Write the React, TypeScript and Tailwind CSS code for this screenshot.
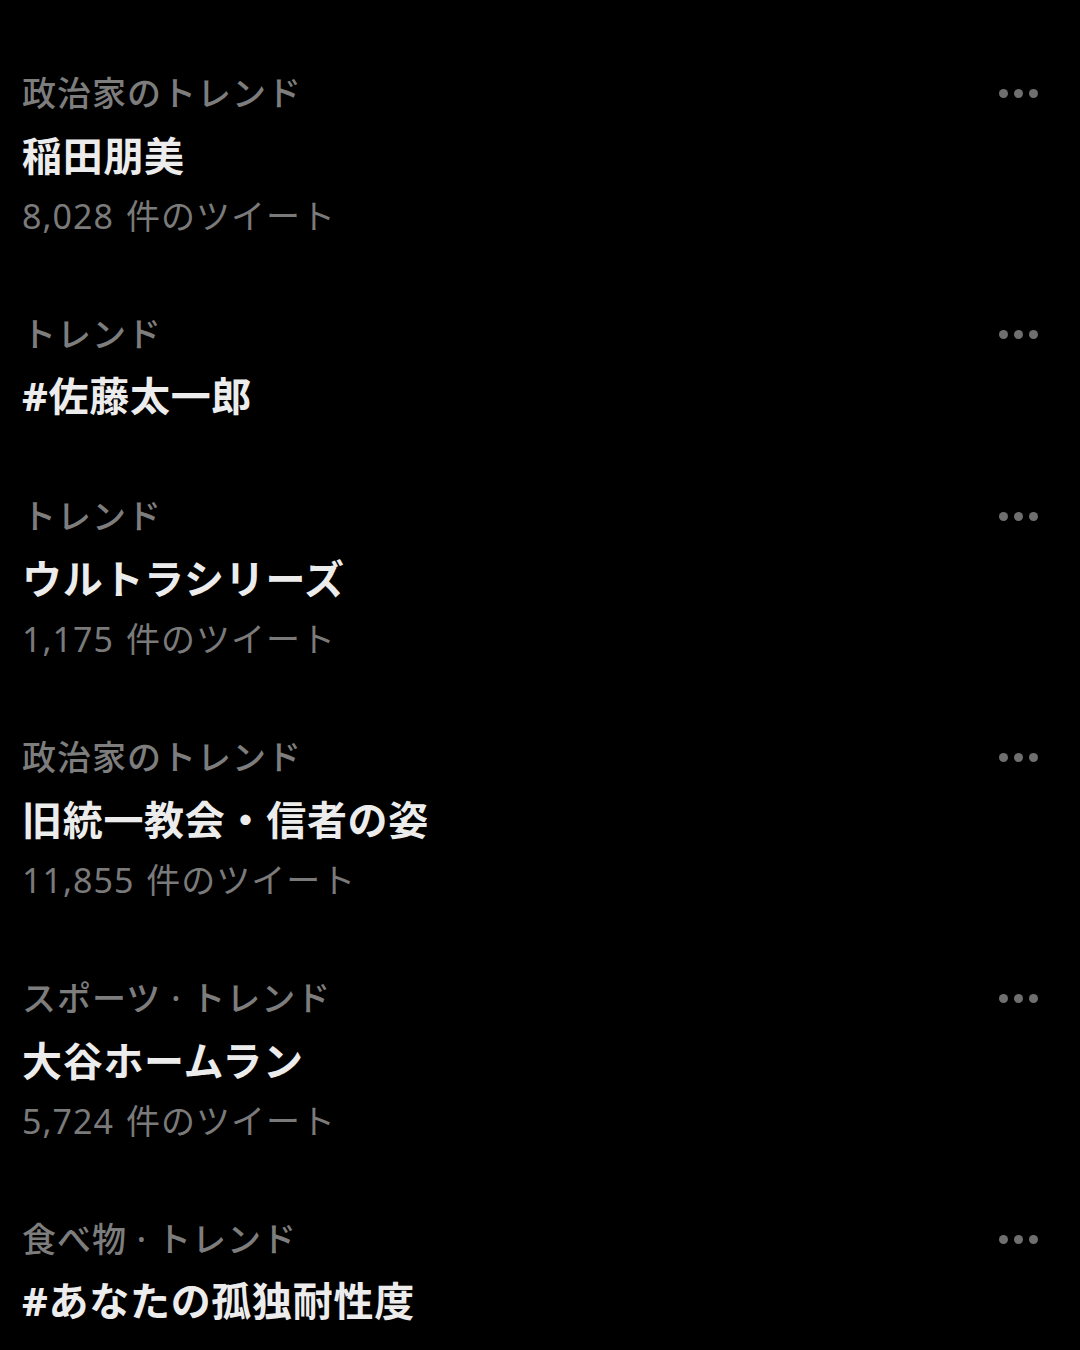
import React from "react";

type Item = { cat: string; title: string; count?: string };

const items: Item[] = [
  { cat: "政治家のトレンド", title: "稲田朋美", count: "8,028" },
  { cat: "トレンド", title: "#佐藤太一郎" },
  { cat: "トレンド", title: "ウルトラシリーズ", count: "1,175" },
  { cat: "政治家のトレンド", title: "旧統一教会・信者の姿", count: "11,855" },
  { cat: "スポーツ · トレンド", title: "大谷ホームラン", count: "5,724" },
  { cat: "食べ物 · トレンド", title: "#あなたの孤独耐性度" },
];

function Dots() {
  return (
    <div className="flex items-center gap-[6px]">
      <span className="block w-[9px] h-[9px] rounded-full bg-[#6f6f6f]" />
      <span className="block w-[9px] h-[9px] rounded-full bg-[#6f6f6f]" />
      <span className="block w-[9px] h-[9px] rounded-full bg-[#6f6f6f]" />
    </div>
  );
}

export default function App() {
  return (
    <div
      className="w-[1080px] h-[1350px] bg-black overflow-hidden pt-[62px] pl-[22px] pr-[42px] flex flex-col gap-[58px]"
      style={{ fontFamily: '"Noto Sans", "Noto Sans CJK JP", sans-serif' }}
    >
      {items.map((it, i) => (
        <div key={i} className="flex flex-col">
          <div className="flex items-center justify-between h-[62px]">
            <span className="text-[34px] leading-[62px] font-medium tracking-[1px] text-[#7d7d7d]">{it.cat}</span>
            <Dots />
          </div>
          <div className={it.count ? "h-[64px] flex items-center" : "h-[62px] flex items-center"}>
            <span className="text-[40px] leading-[60px] font-bold tracking-[0.7px] text-[#ececec]">{it.title}</span>
          </div>
          {it.count && (
            <div className="h-[57px] flex items-center">
              <span className="text-[34px] leading-[57px] text-[#7a7a7a]">
                <span className="tracking-[1px]">{it.count}</span>
                <span className="ml-[12px] tracking-[1px]">件のツイート</span>
              </span>
            </div>
          )}
        </div>
      ))}
    </div>
  );
}
